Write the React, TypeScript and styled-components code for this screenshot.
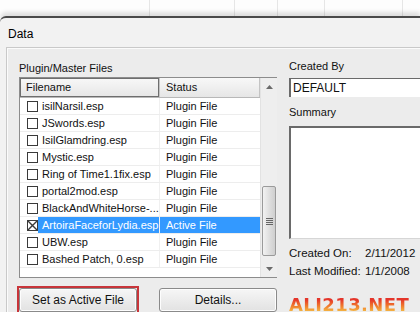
import React from "react";
import styled, { createGlobalStyle } from "styled-components";

const GlobalStyle = createGlobalStyle`
  html, body {
    margin: 0;
    padding: 0;
    background: #ffffff;
  }
  body {
    width: 420px;
    height: 312px;
    overflow: hidden;
    font-family: "Liberation Sans", Arial, sans-serif;
    font-size: 11px;
    color: #111;
  }
`;

const Screen = styled.div`
  width: 420px;
  height: 312px;
  display: flex;
  flex-direction: column;
  overflow: hidden;
`;

const Sheet = styled.div`
  height: 16px;
  flex: none;
  background-color: #fdfdfd;
  background-image: linear-gradient(90deg, transparent 149px, #e6e6e6 149px, #e6e6e6 150px, transparent 150px),
    linear-gradient(90deg, transparent 234px, #e6e6e6 234px, #e6e6e6 235px, transparent 235px),
    linear-gradient(90deg, transparent 277px, #e6e6e6 277px, #e6e6e6 278px, transparent 278px),
    linear-gradient(90deg, transparent 324px, #e6e6e6 324px, #e6e6e6 325px, transparent 325px),
    linear-gradient(90deg, transparent 402px, #e6e6e6 402px, #e6e6e6 403px, transparent 403px);
`;

const Window = styled.div`
  flex: 1;
  display: flex;
  flex-direction: column;
  border-top: 2px solid #4a4a4a;
  border-top-left-radius: 6px;
  box-shadow: 0 -4px 4px rgba(0, 0, 0, 0.12);
  background: #f2f2f2;
`;

const TitleBar = styled.div`
  height: 29px;
  flex: none;
  display: flex;
  align-items: center;
  padding-left: 8px;
  padding-top: 3px;
  box-sizing: border-box;
  font-size: 12px;
  color: #000;
`;

const Panel = styled.div`
  flex: 1;
  margin-left: 6px;
  border-top: 1px solid #c9c9c9;
  border-left: 1px solid #c9c9c9;
  background: #ececec;
  box-shadow: inset 1px 1px 0 #fbfbfb;
  display: flex;
  gap: 12px;
  padding: 13px 0 0 12px;
`;

const LeftColumn = styled.div`
  width: 258px;
  flex: none;
  display: flex;
  flex-direction: column;
`;

const RightColumn = styled.div`
  flex: 1;
  display: flex;
  flex-direction: column;
  min-width: 0;
`;

const Label = styled.div<{ $gap?: number }>`
  height: 14px;
  line-height: 14px;
  margin-top: ${(p) => p.$gap ?? 0}px;
  white-space: nowrap;
`;

const ListBox = styled.div`
  margin-top: 2px;
  height: 201px;
  flex: none;
  border: 1px solid #8c8c8c;
  background: #fff;
  display: flex;
  box-sizing: border-box;
`;

const ListBody = styled.div`
  flex: 1;
  display: flex;
  flex-direction: column;
`;

const Header = styled.div`
  height: 19px;
  display: grid;
  grid-template-columns: 140px 100px;
  border-bottom: 1px solid #b8b8b8;
  background: linear-gradient(#f8f8f8, #e6e6e6);
`;

const HeaderCell = styled.div<{ $boxed?: boolean }>`
  line-height: 18px;
  padding-left: 6px;
  border-right: 1px solid #c4c4c4;
  ${(p) => (p.$boxed ? "box-shadow: inset 0 0 0 1px #6e6e6e;" : "")}
`;

const Row = styled.div<{ $selected?: boolean }>`
  height: 17px;
  display: grid;
  grid-template-columns: 140px 100px;
  border-bottom: 1px solid #ededed;
  box-sizing: border-box;
  color: ${(p) => (p.$selected ? "#fff" : "#111")};
  background: ${(p) =>
    p.$selected ? "linear-gradient(90deg, transparent 18px, #3399ff 18px)" : "transparent"};
`;

const NameCell = styled.div`
  display: flex;
  align-items: center;
  padding-left: 7px;
  gap: 4px;
  white-space: nowrap;
  overflow: hidden;
  border-right: 1px solid #f0f0f0;
`;

const StatusCell = styled.div`
  line-height: 16px;
  padding-left: 6px;
  white-space: nowrap;
  overflow: hidden;
`;

const Check = styled.span`
  width: 11px;
  height: 11px;
  flex: none;
  box-sizing: border-box;
  border: 1px solid #3a3a3a;
  background: #fff;
  display: inline-flex;
`;

const ScrollBar = styled.div`
  width: 16px;
  flex: none;
  background: #eeeeee;
  border-left: 1px solid #e2e2e2;
  display: flex;
  flex-direction: column;
`;

const Arrow = styled.div`
  height: 17px;
  display: flex;
  align-items: center;
  justify-content: center;
`;

const Track = styled.div`
  flex: 1;
  display: flex;
  flex-direction: column;
  justify-content: flex-end;
  padding-bottom: 4px;
`;

const Thumb = styled.div`
  height: 68px;
  margin: 0 1px;
  border: 1px solid #9a9a9a;
  border-radius: 2px;
  background: linear-gradient(90deg, #f2f2f2, #dcdcdc 60%, #cfcfcf);
  display: flex;
  align-items: center;
  justify-content: center;
`;

const ButtonRow = styled.div`
  margin-top: 10px;
  display: flex;
  justify-content: space-between;
`;

const Highlight = styled.div`
  border: 2px solid #c8353a;
  margin: -2px 0 0 -2px;
`;

const Button = styled.button<{ $width: number }>`
  width: ${(p) => p.$width}px;
  height: 24px;
  font: inherit;
  font-size: 12px;
  color: #111;
  border: 1px solid #8a8a8a;
  border-radius: 3px;
  background: linear-gradient(#f6f6f6, #e2e2e2);
  box-shadow: inset 0 0 0 1px #fdfdfd;
  padding: 0;
  display: block;
`;

const TextInput = styled.div`
  margin-top: 5px;
  height: 19px;
  line-height: 18px;
  font-size: 12px;
  box-sizing: border-box;
  background: #fff;
  border-top: 1px solid #6a6a6a;
  border-left: 2px solid #6a6a6a;
  padding-left: 2px;
`;

const TextArea = styled.div`
  margin-top: 7px;
  height: 113px;
  box-sizing: border-box;
  background: #fff;
  border-top: 2px solid #6a6a6a;
  border-left: 2px solid #6a6a6a;
  border-bottom: 1px solid #d6d6d6;
`;

const InfoGrid = styled.div`
  margin-top: 7px;
  display: grid;
  grid-template-columns: 76px auto;
  row-gap: 4px;
  line-height: 14px;
  font-size: 11.5px;
  white-space: nowrap;
`;

const Watermark = styled.div`
  margin-top: auto;
  margin-bottom: 0;
  align-self: flex-start;
  font-family: "DejaVu Sans", sans-serif;
  font-weight: 900;
  font-size: 18px;
  line-height: 18px;
  letter-spacing: 0.4px;
  color: transparent;
  background: linear-gradient(#e4352a 20%, #f07a2c 55%, #f6c94a 95%);
  -webkit-background-clip: text;
  background-clip: text;
  white-space: nowrap;
`;

const CheckMark = () => (
  <svg width="9" height="9" viewBox="0 0 9 9">
    <path d="M0 0 L9 9 M9 0 L0 9" stroke="#3a3a3a" strokeWidth="1.4" />
  </svg>
);

const files = [
  { name: "isilNarsil.esp", status: "Plugin File" },
  { name: "JSwords.esp", status: "Plugin File" },
  { name: "IsilGlamdring.esp", status: "Plugin File" },
  { name: "Mystic.esp", status: "Plugin File" },
  { name: "Ring of Time1.1fix.esp", status: "Plugin File" },
  { name: "portal2mod.esp", status: "Plugin File" },
  { name: "BlackAndWhiteHorse-...", status: "Plugin File" },
  { name: "ArtoiraFaceforLydia.esp", status: "Active File", active: true },
  { name: "UBW.esp", status: "Plugin File" },
  { name: "Bashed Patch, 0.esp", status: "Plugin File" },
];

export default function App() {
  return (
    <Screen>
      <GlobalStyle />
      <Sheet />
      <Window>
        <TitleBar>Data</TitleBar>
        <Panel>
          <LeftColumn>
            <Label>Plugin/Master Files</Label>
            <ListBox>
              <ListBody>
                <Header>
                  <HeaderCell $boxed>Filename</HeaderCell>
                  <HeaderCell>Status</HeaderCell>
                </Header>
                {files.map((f) => (
                  <Row key={f.name} $selected={f.active}>
                    <NameCell>
                      <Check>{f.active && <CheckMark />}</Check>
                      {f.name}
                    </NameCell>
                    <StatusCell>{f.status}</StatusCell>
                  </Row>
                ))}
              </ListBody>
              <ScrollBar>
                <Arrow>
                  <svg width="7" height="4" viewBox="0 0 7 4">
                    <path d="M0 4 L3.5 0 L7 4 Z" fill="#6a6a6a" />
                  </svg>
                </Arrow>
                <Track>
                  <Thumb>
                    <svg width="7" height="7" viewBox="0 0 7 7">
                      <path d="M0 0.5 H7 M0 2.5 H7 M0 4.5 H7 M0 6.5 H7" stroke="#666" strokeWidth="1" />
                    </svg>
                  </Thumb>
                </Track>
                <Arrow>
                  <svg width="7" height="4" viewBox="0 0 7 4">
                    <path d="M0 0 L3.5 4 L7 0 Z" fill="#6a6a6a" />
                  </svg>
                </Arrow>
              </ScrollBar>
            </ListBox>
            <ButtonRow>
              <Highlight>
                <Button $width={118}>Set as Active File</Button>
              </Highlight>
              <Button $width={118}>Details...</Button>
            </ButtonRow>
          </LeftColumn>
          <RightColumn>
            <Label $gap={-2}>Created By</Label>
            <TextInput>DEFAULT</TextInput>
            <Label $gap={8}>Summary</Label>
            <TextArea />
            <InfoGrid>
              <span>Created On:</span>
              <span>2/11/2012</span>
              <span>Last Modified:</span>
              <span>1/1/2008</span>
            </InfoGrid>
            <Watermark>ALI213.NET</Watermark>
          </RightColumn>
        </Panel>
      </Window>
    </Screen>
  );
}
